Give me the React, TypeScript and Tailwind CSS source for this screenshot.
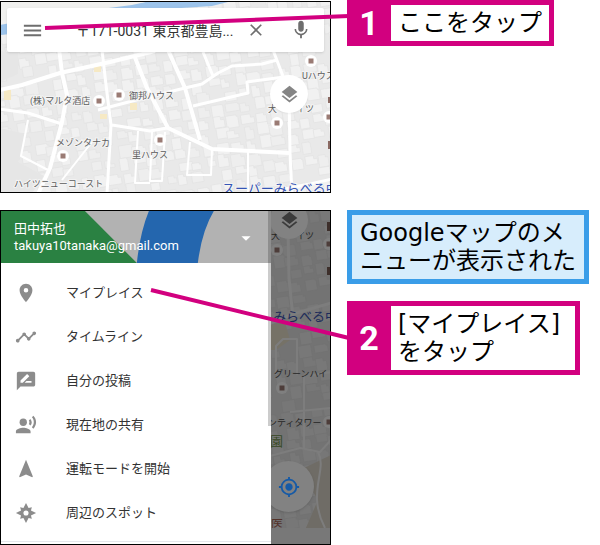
import type { ReactNode } from "react";
import {
  MdArrowDropDown,
  MdClose,
  MdLayers,
  MdMenu,
  MdMic,
  MdMyLocation,
  MdNavigation,
  MdPlace,
  MdRateReview,
  MdRecordVoiceOver,
  MdTimeline,
} from "react-icons/md";

const MAP_FONT = "font-['Roboto','Noto_Sans_CJK_JP',sans-serif]";

function SpotIcon() {
  return (
    <svg width="22" height="22" viewBox="0 0 24 24" fill="currentColor" aria-hidden="true">
      <path
        fillRule="evenodd"
        d="M12 1 14.8 6.6 18.4 5.6 17.4 9.2 23 12 17.4 14.8 18.4 18.4 14.8 17.4 12 23 9.2 17.4 5.6 18.4 6.6 14.8 1 12 6.6 9.2 5.6 5.6 9.2 6.6ZM12 9.2a2.8 2.8 0 1 0 0 5.6 2.8 2.8 0 0 0 0-5.6Z"
      />
    </svg>
  );
}

const menu: { label: string; icon: ReactNode }[] = [
  { label: "マイプレイス", icon: <MdPlace size={22} /> },
  { label: "タイムライン", icon: <MdTimeline size={22} /> },
  { label: "自分の投稿", icon: <MdRateReview size={22} /> },
  { label: "現在地の共有", icon: <MdRecordVoiceOver size={22} /> },
  { label: "運転モードを開始", icon: <MdNavigation size={22} /> },
  { label: "周辺のスポット", icon: <SpotIcon /> },
];

// Small deterministic hash, keeps the building blocks stable between renders
function noise(n: number) {
  const v = Math.sin(n * 127.1) * 43758.5453;
  return v - Math.floor(v);
}

function Buildings({ top, rows }: { top: number; rows: number }) {
  const blocks = [];
  for (let r = 0; r < rows; r++) {
    for (let c = 0; c < 26; c++) {
      const k = r * 31 + c + top;
      if (noise(k + 5) < 0.12) continue;
      const x = c * 14 - 8 + noise(k) * 5;
      const y = top + r * 13 + noise(k + 1) * 5;
      const w = 8 + noise(k + 2) * 6;
      const h = 7 + noise(k + 3) * 6;
      const n = noise(k + 4) * 4;
      blocks.push(
        <path
          key={k}
          d={`M${x} ${y}h${w - n}v${n}h${n}v${h - n}h${-w}z`}
          fill={noise(k + 6) > 0.35 ? "#f1f1f1" : "#eeeeee"}
          stroke="#e3e3e3"
          strokeWidth="0.7"
        />
      );
    }
  }
  return <g transform={`rotate(-9 165 ${top + 90})`}>{blocks}</g>;
}

function Pin({ x, y }: { x: number; y: number }) {
  return (
    <g>
      <circle cx={x} cy={y} r="6" fill="#fff" />
      <rect x={x - 2.5} y={y - 2.5} width="5" height="5" fill="#9a7b74" />
    </g>
  );
}

function StreetMap() {
  return (
    <svg
      className={`absolute inset-0 h-full w-full ${MAP_FONT}`}
      viewBox="1 2 329 190"
      preserveAspectRatio="xMinYMin slice"
      aria-hidden="true"
    >
      <rect width="340" height="200" fill="#e9e9e9" />
      <Buildings top={-20} rows={19} />
      <path d="M0 52h18v22L0 82zM0 128l26 6-8 28 26 14-14 20H0z" fill="#e6e6e6" />
      <path d="M0 25 60 14 138 3 160 0H236L212 6 120 12 60 28 0 35z" fill="#9cc3ea" />
      <path d="M0 1H150L132 5 0 22z" fill="#f0f0ee" />
      <g fill="#f6e9c4">
        <path d="M94 66h7v6h-7zM130 103h7v7h-7zM100 114h7v5h-7zM4 90h7v10H4z" />
      </g>
      <g fill="none" stroke="#fff" strokeLinejoin="round">
        <path
          strokeWidth="4"
          d="M59 48 62 73 67 95 62 122 50 168 38 194M0 90 22 85 60 73 110 62 155 51M168 50 185 88 200 140M134 55 147 88 168 128 212 149 290 153"
        />
        <path
          strokeWidth="3"
          d="M102 50 106 85 111 125 107 194M0 109 28 113 62 124M98 110 140 99 185 88 202 84 218 73 232 66 262 64 277 60M112 125 150 131 167 128M203 52 213 76M273 50 289 92 290 153 292 194M270 192 310 184 332 179M193 106 248 93 247 82 284 77"
        />
        <path
          strokeWidth="2"
          d="M28 120 21 156 48 170M138 131 135 183H150M152 132 150 181 162 181 165 132M190 142 187 175 211 175 212 149M248 152V194M62 180 92 142"
        />
      </g>
      <Pin x={119} y={95} />
      <Pin x={99} y={101} />
      <Pin x={63} y={156} />
      <Pin x={160} y={140} />
      <Pin x={311} y={61} />
      <Pin x={277} y={123} />
      <Pin x={329} y={117} />
      <path d="M328 97h3v6h-3zM328 141h3v8h-3z" fill="#8a6a63" />
      <g fill="#5c5c5c" stroke="#f4f4f4" strokeWidth="2" paintOrder="stroke" fontSize="9">
        <text x="30" y="104">(株)マルタ酒店</text>
        <text x="129" y="99">御邦ハウス</text>
        <text x="56" y="146">メゾンタナカ</text>
        <text x="132" y="158">里ハウス</text>
        <text x="14" y="187">ハイツニューコースト</text>
        <text x="302" y="79">Uハウス</text>
        <text x="268" y="112">大</text>
        <text x="296" y="112">イツ</text>
      </g>
      <text
        x="222"
        y="193"
        fontSize="13"
        fill="#3555b5"
        stroke="#f4f4f4"
        strokeWidth="2"
        paintOrder="stroke"
      >
        スーパーみらべる中
      </text>
    </svg>
  );
}

function DimmedMap() {
  return (
    <svg
      className={`absolute inset-0 h-full w-full ${MAP_FONT}`}
      viewBox="1 211 329 333"
      preserveAspectRatio="xMinYMin slice"
      aria-hidden="true"
    >
      <rect y="200" width="340" height="350" fill="#e6e6e6" />
      <Buildings top={195} rows={29} />
      <path d="M270 325 285 322 290 340 276 350 270 350z" fill="#ece4cf" />
      <path d="M300 470 331 455V530H305L318 500z" fill="#ded8cc" />
      <g fill="none" stroke="#fafafa" strokeLinejoin="round">
        <path strokeWidth="3" d="M288 230 289 278 293 318M268 324 293 314 331 303" />
        <path
          strokeWidth="2"
          d="M276 375V346L283 339H297V375M304 375V448M290 412 331 408M270 456 300 448 320 452 331 440M313 375 331 372"
        />
        <path strokeWidth="2" d="M318 452C328 470 306 492 325 528" />
      </g>
      <Pin x={277} y={250} />
      <Pin x={282} y={388} />
      <Pin x={329} y={244} />
      <Pin x={329} y={422} />
      <path d="M327 222h4v9h-4zM327 267h4v8h-4z" fill="#7a5e57" />
      <g fill="#4c4c4c" fontSize="9">
        <text x="271" y="239">大</text>
        <text x="296" y="239">イツ</text>
        <text x="274" y="377">グリーンハイ</text>
        <text x="268" y="426">ンティタワー</text>
      </g>
      <text x="273" y="321" fontSize="13" fill="#3b56b4">
        みらべる中
      </text>
      <text x="270" y="446" fontSize="13" fill="#6f934a">園</text>
      <text x="271" y="529" fontSize="12" fill="#a86656">医</text>
      <rect x="270" y="528" width="62" height="18" fill="#f0f0f0" />
    </svg>
  );
}

function SearchScreen() {
  return (
    <section className="relative mt-px h-48 overflow-hidden border border-black">
      <StreetMap />
      <div className="relative mx-1.5 mt-1.5 flex h-11 items-center rounded-xs bg-white pr-3 pl-[14px] text-[#6e6e6e] shadow">
        <button aria-label="メニュー" className="shrink-0">
          <MdMenu size={23} />
        </button>
        <input
          aria-label="検索"
          defaultValue="〒171-0031 東京都豊島..."
          className={`ml-8 min-w-0 flex-1 bg-transparent pt-0.5 text-sm text-[#333] outline-none ${MAP_FONT}`}
        />
        <button aria-label="クリア" className="shrink-0">
          <MdClose size={20} />
        </button>
        <button aria-label="音声検索" className="ml-6 shrink-0">
          <MdMic size={22} />
        </button>
      </div>
      <button
        aria-label="レイヤ"
        className="absolute top-[73px] right-[22px] flex size-[38px] items-center justify-center rounded-full bg-white text-[#858585] shadow-xs"
      >
        <MdLayers size={21} />
      </button>
    </section>
  );
}

function DrawerScreen() {
  return (
    <section className="relative overflow-hidden border border-black">
      <DimmedMap />
      <div className="absolute inset-0 bg-black/50" />
      <button
        aria-label="レイヤ"
        className="absolute -top-[10px] right-[22px] flex size-[38px] items-center justify-center rounded-full bg-[#828282] text-[#3b3b3b]"
      >
        <MdLayers size={21} />
      </button>
      <button
        aria-label="現在地"
        className="absolute right-4 bottom-8 flex size-[51px] items-center justify-center rounded-full bg-[#828282] text-[#165aa6] shadow"
      >
        <MdMyLocation size={22} />
      </button>

      <nav className={`relative w-[82%] bg-white ${MAP_FONT}`}>
        <header className="relative flex h-[52px] flex-col justify-center bg-[#b2b2b2] pl-[13px] text-[13px] leading-[17px] text-white">
          <svg
            className="absolute inset-0 h-full w-full"
            viewBox="0 0 270 52"
            preserveAspectRatio="none"
            aria-hidden="true"
          >
            <path d="M0 0H84L136 52H0z" fill="#2a8142" />
            <path d="M148 0H213Q201 20 197 52H136Q139 22 148 0z" fill="#2466ae" />
          </svg>
          <span className="relative">田中拓也</span>
          <span className="relative">takuya10tanaka@gmail.com</span>
          <button aria-label="アカウント" className="absolute top-4 right-[14px]">
            <MdArrowDropDown size={22} />
          </button>
        </header>
        <ul className="pt-2 pb-1.5">
          {menu.map((item) => (
            <li key={item.label}>
              <a href="#" className="flex h-11 items-center pl-[14px] text-[13px] text-[#333]">
                <span className="text-[#8c8c8c]">{item.icon}</span>
                <span className="ml-[29px]">{item.label}</span>
              </a>
            </li>
          ))}
        </ul>
        <div className="border-t border-gray-200 pb-0.5" />
        <div className="absolute top-0 right-0 h-[215px] w-[3px] bg-black/20" />
      </nav>
    </section>
  );
}

function Step({ number, children }: { number: number; children: ReactNode }) {
  return (
    <div className="flex w-fit bg-[#d2007f] py-[5px] pr-[5px]">
      <div className="flex w-11 items-center justify-center font-['Roboto',sans-serif] text-[34px] leading-none font-bold text-white">
        {number}
      </div>
      <p className="bg-white px-[7px] py-1 text-2xl leading-7">{children}</p>
    </div>
  );
}

export default function App() {
  return (
    <main className="relative bg-white font-['DejaVu_Sans','Noto_Sans_CJK_JP',sans-serif] text-black">
      <div className="grid grid-cols-[331fr_269fr] gap-y-[17px]">
        <SearchScreen />
        <div className="pl-4">
          <Step number={1}>ここをタップ</Step>
        </div>

        <DrawerScreen />
        <div className="flex flex-col gap-[17px] pl-4">
          <p className="w-fit border-[5px] border-[#3a9de8] bg-[#d7edfc] px-2 py-1 text-2xl leading-7">
            Googleマップのメ
            <br />
            ニューが表示された
          </p>
          <Step number={2}>
            <span className="pr-2">[マイプレイス]</span>
            <br />
            をタップ
          </Step>
        </div>
      </div>

      {/* leader lines from each step to its target */}
      <svg
        className="pointer-events-none absolute inset-0 h-full w-full"
        viewBox="0 0 600 545"
        preserveAspectRatio="none"
        aria-hidden="true"
      >
        <path d="M45 28 349 16M151 290 349 338" stroke="#d2007f" strokeWidth="4" fill="none" />
      </svg>
    </main>
  );
}
